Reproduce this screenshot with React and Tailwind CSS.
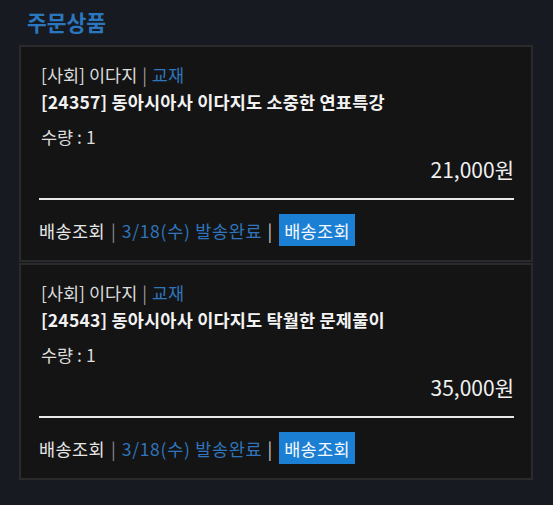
import React from "react";

const font = { fontFamily: '"Noto Sans CJK KR", "Noto Sans", sans-serif' };

function Card({ code, title, price }) {
  return (
    <div className="border-2 border-[#2a2a2a] bg-[#141414] pl-[18px] pr-[17px] pt-[14px] pb-[14px]">
      <div className="text-[17.5px] leading-[27px] text-[#dcdcdc] pl-[2px]">
        [사회] 이다지 <span className="text-[#9a9a9a] mx-[1px]">|</span>{" "}
        <span className="text-[#2f74bd]">교재</span>
      </div>
      <div className="text-[17.5px] leading-[27px] font-bold text-[#f2f2f2] pl-[2px] tracking-[0.2px]">
        [{code}] {title}
      </div>
      <div className="mt-[8px] text-[17.5px] leading-[27px] text-[#dcdcdc] pl-[2px]">
        수량 : 1
      </div>
      <div className="mt-[4px] text-right text-[21px] leading-[30px] text-[#f0f0f0]">
        {price}원
      </div>
      <div className="mt-[14px] h-[2px] bg-[#e8e8e8]" />
      <div className="mt-[14px] flex items-center text-[17.5px] leading-[27px]">
        <span className="text-[#e6e6e6] tracking-[0.4px]">배송조회</span>
        <span className="mx-[6px] text-[#8a8a8a]">|</span>
        <span className="text-[#2f74bd] tracking-[0.7px]">3/18(수) 발송완료</span>
        <span className="mx-[5px] text-[#d0d0d0]">|</span>
        <span className="ml-[2px] bg-[#1b7fd3] px-[5px] h-[32px] flex items-center text-[#f4f8ff] tracking-[0.4px]">
          배송조회
        </span>
      </div>
    </div>
  );
}

export default function App() {
  return (
    <div style={font} className="w-[553px] h-[505px] bg-[#171b21] pl-[19px] pr-[20px] pt-[6px]">
      <div className="pl-[8px] text-[21.5px] leading-[32px] font-bold text-[#2b77bf]">주문상품</div>
      <div className="mt-[7px] flex flex-col gap-[1px]">
        <Card code="24357" title="동아시아사 이다지도 소중한 연표특강" price="21,000" />
        <Card code="24543" title="동아시아사 이다지도 탁월한 문제풀이" price="35,000" />
      </div>
    </div>
  );
}
